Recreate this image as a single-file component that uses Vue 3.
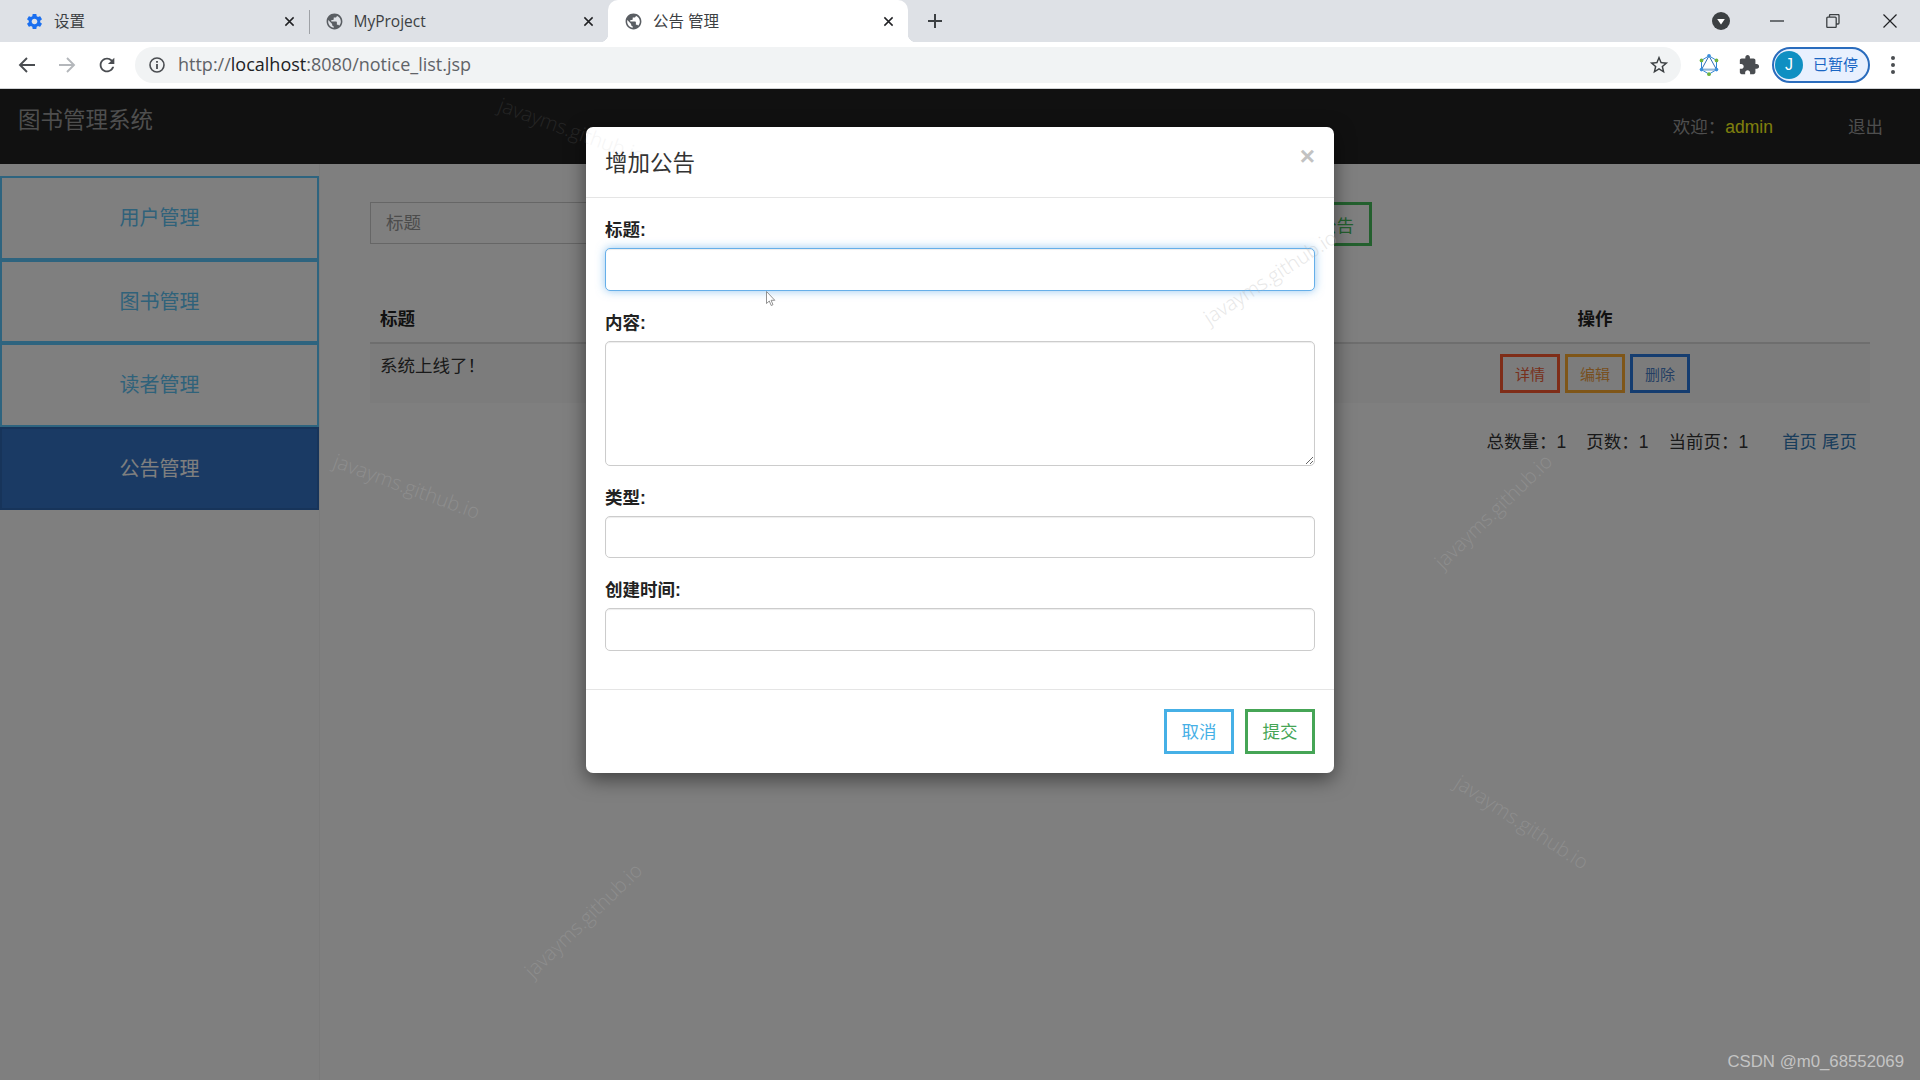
<template>
    <div class="screen">
        <div class="tabbar">
            <div v-for="t in tabs" class="tab" :class="{ active: t.active, split: t.split }">
                <svg v-if="t.icon == 'gear'" class="favicon" viewBox="0 0 24 24"><path fill="#1a6ff0" :d="gearPath" /></svg>
                <svg v-else class="favicon" viewBox="0 0 24 24"><path fill="#5a5e63" :d="globePath" /></svg>
                <span class="tab-title">{{ t.title }}</span>
                <svg class="tab-close" viewBox="0 0 12 12"><path d="M1.5 1.5l9 9M10.5 1.5l-9 9" stroke="#202124" stroke-width="1.6" /></svg>
            </div>
            <svg class="plus" viewBox="0 0 16 16"><path d="M8 1v14M1 8h14" stroke="#3c4043" stroke-width="2" /></svg>
            <div class="win-controls">
                <svg class="tab-search" viewBox="0 0 18 18">
                    <circle cx="9" cy="9" r="9" fill="#3c4043" />
                    <path d="M5.2 7h7.6L9 12.4z" fill="#fff" />
                </svg>
                <div class="win-btn"><svg width="14" height="14" viewBox="0 0 14 14"><path d="M0 7h14" stroke="#3c4043" stroke-width="1.4" /></svg></div>
                <div class="win-btn"><svg width="14" height="14" viewBox="0 0 14 14"><path d="M3.5 3V1.5a1 1 0 0 1 1-1h7.5a1 1 0 0 1 1 1V9a1 1 0 0 1-1 1h-1.5M1.8 3.2h7.4a1 1 0 0 1 1 1v8.3a1 1 0 0 1-1 1H1.8a1 1 0 0 1-1-1V4.200a1 1 0 0 1 1-1z" fill="none" stroke="#3c4043" stroke-width="1.3" /></svg></div>
                <div class="win-btn last"><svg width="14" height="14" viewBox="0 0 14 14"><path d="M.5.5l13 13M13.500.5l-13 13" stroke="#202124" stroke-width="1.2" /></svg></div>
            </div>
        </div>

        <div class="toolbar">
            <div class="nav-btn"><svg width="18" height="18" viewBox="0 0 18 18"><path d="M17 9H2M9 2L2 9l7 7" fill="none" stroke="#4a4d51" stroke-width="1.9" /></svg></div>
            <div class="nav-btn"><svg width="18" height="18" viewBox="0 0 18 18"><path d="M1 9h15M9 2l7 7-7 7" fill="none" stroke="#b4b7bb" stroke-width="1.9" /></svg></div>
            <div class="nav-btn"><svg width="22" height="22" viewBox="0 0 24 24"><path fill="#4a4d51" d="M17.650 6.350A7.958 7.958 0 0 0 12 4c-4.420 0-7.990 3.580-7.990 8s3.570 8 7.990 8c3.730 0 6.840-2.550 7.730-6h-2.080A5.990 5.990 0 0 1 12 18c-3.310 0-6-2.690-6-6s2.690-6 6-6c1.660 0 3.140.69 4.220 1.780L13 11h7V4l-2.350 2.350z" /></svg></div>
            <div class="address">
                <svg class="info" viewBox="0 0 16 16">
                    <circle cx="8" cy="8" r="7" fill="none" stroke="#4a4d51" stroke-width="1.6" />
                    <path d="M8 7v5M8 4v1.800" stroke="#4a4d51" stroke-width="1.8" />
                </svg>
                <span class="url">http://<b>localhost</b>:8080/notice_list.jsp</span>
                <svg class="star" viewBox="0 0 24 24"><path fill="#3c4043" :d="starPath" /></svg>
            </div>
            <div class="nav-btn ext">
                <svg width="20" height="24" viewBox="0 0 24 28">
                    <path d="M12 3L21 8.500v11L12 25l-9-5.500v-11z" fill="none" stroke="#2f86d6" stroke-width="1.200" />
                    <path d="M12 3L21 19.500H3z" fill="none" stroke="#2f6cb5" stroke-width="1.200" />
                    <path d="M4 19.500h16" stroke="#8fb4d8" stroke-width="2.500" />
                    <circle cx="12" cy="3" r="2.200" fill="#3a8fdc" />
                    <circle cx="21" cy="8.500" r="2.200" fill="#6db33f" />
                    <circle cx="21" cy="19.500" r="2.200" fill="#3a8fdc" />
                    <circle cx="12" cy="25" r="2.200" fill="#6db33f" />
                    <circle cx="3" cy="19.500" r="2.200" fill="#3a8fdc" />
                    <circle cx="3" cy="8.500" r="2.200" fill="#6db33f" />
                </svg>
            </div>
            <div class="nav-btn"><svg width="22" height="22" viewBox="0 0 24 24"><path fill="#4a4d51" :d="puzzlePath" /></svg></div>
            <div class="profile">
                <span class="avatar">J</span>
                <span class="paused">已暂停</span>
            </div>
            <div class="more"><i></i><i></i><i></i></div>
        </div>

        <div class="page">
            <div class="navbar">
                <div class="brand">图书管理系统</div>
                <div class="nav-right">
                    <span>欢迎：<span class="admin">admin</span></span>
                    <span class="logout">退出</span>
                </div>
            </div>
            <div class="body">
                <div class="sidebar">
                    <div v-for="m in menu" class="menu-item" :class="{ current: m == '公告管理' }">{{ m }}</div>
                </div>
                <div class="main">
                    <div class="search-row">
                        <input class="search" type="text" placeholder="标题" />
                        <button class="btn-add">增加公告</button>
                    </div>
                    <table class="list">
                        <thead>
                            <tr><th class="col-title">标题</th><th class="col-ops">操作</th></tr>
                        </thead>
                        <tbody>
                            <tr>
                                <td>系统上线了！</td>
                                <td class="ops">
                                    <button class="mini red">详情</button>
                                    <button class="mini orange">编辑</button>
                                    <button class="mini blue">删除</button>
                                </td>
                            </tr>
                        </tbody>
                    </table>
                    <div class="pager">
                        <span>总数量：1</span>
                        <span>页数：1</span>
                        <span>当前页：1</span>
                        <span class="links"><a>首页</a> <a>尾页</a></span>
                    </div>
                </div>
            </div>

            <div class="backdrop"></div>

            <div class="modal">
                <div class="modal-header">
                    <h4>增加公告</h4>
                    <span class="close">×</span>
                </div>
                <div class="modal-body">
                    <div class="group">
                        <label>标题:</label>
                        <input class="field focus" type="text" />
                    </div>
                    <div class="group">
                        <label>内容:</label>
                        <textarea class="field area"></textarea>
                    </div>
                    <div class="group">
                        <label>类型:</label>
                        <input class="field" type="text" />
                    </div>
                    <div class="group">
                        <label>创建时间:</label>
                        <input class="field" type="text" />
                    </div>
                </div>
                <div class="modal-footer">
                    <button class="foot cancel">取消</button>
                    <button class="foot submit">提交</button>
                </div>
            </div>

            <svg class="pointer" width="10" height="16" viewBox="0 0 10 16">
                <path d="M.5.500v12l2.800-2.500 1.900 4.500 1.800-.8-1.900-4.400h3.700z" fill="#fff" stroke="#777" stroke-width=".8" />
            </svg>
        </div>

        <span v-for="w in marks" class="mark" :style="{ left: w.x + 'px', top: w.y + 'px', opacity: w.o, transform: `translate(-50%, -50%) rotate(${w.r}deg)` }">javayms.github.io</span>
        <span class="csdn">CSDN @m0_68552069</span>
    </div>
</template>

<script setup>
const tabs = [
    { title: "设置", icon: "gear" },
    { title: "MyProject", icon: "globe", split: true },
    { title: "公告 管理", icon: "globe", active: true }
]
const menu = ["用户管理", "图书管理", "读者管理", "公告管理"]
const marks = [
    { x: 572, y: 130, r: 20, o: .12 },
    { x: 407, y: 486, r: 20, o: .3 },
    { x: 1270, y: 277, r: -33, o: .3 },
    { x: 1493, y: 511, r: -44, o: .3 },
    { x: 1522, y: 822, r: 33, o: .3 },
    { x: 583, y: 920, r: -44, o: .3 }
]

const gearPath = "M19.14 12.94c.04-.3.06-.61.06-.94 0-.32-.02-.64-.07-.94l2.03-1.58c.18-.14.23-.41.12-.61l-1.92-3.32c-.12-.22-.37-.29-.59-.22l-2.39.96c-.5-.38-1.03-.7-1.62-.94l-.36-2.54c-.04-.24-.24-.41-.48-.41h-3.84c-.24 0-.43.17-.47.41l-.36 2.54c-.59.24-1.13.57-1.62.94l-2.39-.96c-.22-.08-.47 0-.59.22L2.74 8.87c-.12.21-.08.47.12.61l2.03 1.58c-.05.3-.09.63-.09.94s.02.64.07.94l-2.03 1.58c-.18.14-.23.41-.12.61l1.92 3.32c.12.22.37.29.59.22l2.39-.96c.5.38 1.03.7 1.62.94l.36 2.54c.05.24.24.41.48.41h3.84c.24 0 .44-.17.47-.41l.36-2.54c.59-.24 1.13-.56 1.62-.94l2.39.96c.22.08.47 0 .59-.22l1.92-3.32c.12-.22.07-.47-.12-.61l-2.01-1.58zM12 15.6c-1.98 0-3.6-1.62-3.6-3.6s1.62-3.6 3.6-3.6 3.6 1.62 3.6 3.6-1.62 3.6-3.6 3.6z"
const globePath = "M12 2C6.48 2 2 6.48 2 12s4.48 10 10 10 10-4.48 10-10S17.52 2 12 2zm-1 17.93c-3.95-.49-7-3.85-7-7.93 0-.62.08-1.21.21-1.79L9 15v1c0 1.1.9 2 2 2v1.93zm6.9-2.54c-.26-.81-1-1.39-1.9-1.39h-1v-3c0-.55-.45-1-1-1H8v-2h2c.55 0 1-.45 1-1V7h2c1.1 0 2-.9 2-2v-.41c2.93 1.19 5 4.06 5 7.41 0 2.08-.8 3.97-2.1 5.39z"
const starPath = "M22 9.24l-7.19-.62L12 2 9.19 8.63 2 9.24l5.46 4.73L5.82 21 12 17.27 18.18 21l-1.63-7.03L22 9.24zM12 15.4l-3.76 2.27 1-4.28-3.32-2.88 4.38-.38L12 6.1l1.71 4.04 4.38.38-3.32 2.88 1 4.28L12 15.4z"
const puzzlePath = "M20.5 11H19V7c0-1.1-.9-2-2-2h-4V3.5C13 2.12 11.88 1 10.5 1S8 2.12 8 3.5V5H4c-1.1 0-1.99.9-1.99 2v3.8H3.5c1.49 0 2.7 1.21 2.7 2.7s-1.21 2.7-2.7 2.7H2V20c0 1.1.9 2 2 2h3.8v-1.5c0-1.49 1.21-2.7 2.7-2.7 1.49 0 2.7 1.21 2.7 2.7V22H17c1.1 0 2-.9 2-2v-4h1.5c1.38 0 2.5-1.12 2.5-2.5S21.88 11 20.5 11z"
</script>

<style>
html, body {
    margin: 0;
    overflow: hidden;
}
</style>

<style scoped>
.screen {
    width: 1920px;
    height: 1080px;
    display: flex;
    flex-direction: column;
    position: relative;
    overflow: hidden;
    font-family: "Liberation Sans", "Noto Sans CJK SC", sans-serif;
    font-size: 17.5px;
    line-height: 25px;
    color: #333;
    background: #fff;
}

button, input, textarea {
    font-family: inherit;
    box-sizing: border-box;
}

/* browser chrome */
.tabbar {
    height: 42px;
    flex: none;
    display: flex;
    align-items: center;
    padding-left: 9px;
    background: #dee1e6;
    font-family: "Open Sans", "Noto Sans CJK SC", sans-serif;
}

.tab {
    width: 299.5px;
    height: 42px;
    box-sizing: border-box;
    flex: none;
    display: flex;
    align-items: center;
    padding: 0 14px 0 16px;
    position: relative;
    font-size: 15.500px;
    color: #3c4043;
}

.tab.split::before {
    content: "";
    position: absolute;
    left: 0;
    top: 10px;
    height: 24px;
    width: 1px;
    background: #9ea1a6;
}

.tab.active {
    background: #fff;
    border-radius: 10px 10px 0 0;
}

.tab.active::before,
.tab.active::after {
    content: "";
    position: absolute;
    bottom: 0;
    width: 8px;
    height: 8px;
}

.tab.active::before {
    left: -8px;
    background: radial-gradient(circle at 0 0, transparent 8px, #fff 8.5px);
}

.tab.active::after {
    right: -8px;
    background: radial-gradient(circle at 100% 0, transparent 8px, #fff 8.5px);
}

.favicon {
    width: 19px;
    height: 19px;
    flex: none;
}

.tab-title {
    margin-left: 10px;
    flex: 1;
}

.tab-close {
    width: 11px;
    height: 11px;
    flex: none;
}

.plus {
    width: 16px;
    height: 16px;
    margin-left: 19px;
    flex: none;
}

.win-controls {
    margin-left: auto;
    display: flex;
    align-items: center;
    padding-right: 1px;
}

.tab-search {
    width: 18px;
    height: 18px;
    margin-right: 19px;
}

.win-btn {
    width: 56px;
    height: 38px;
    display: flex;
    align-items: center;
    justify-content: center;
}

.win-btn.last {
    width: 58px;
}

.toolbar {
    height: 47px;
    box-sizing: border-box;
    flex: none;
    display: flex;
    align-items: center;
    padding: 0 4px 1px 7px;
    background: #fff;
    border-bottom: 1px solid #d0d2d5;
}

.nav-btn {
    width: 40px;
    height: 40px;
    flex: none;
    display: flex;
    align-items: center;
    justify-content: center;
}

.address {
    flex: 1;
    height: 36px;
    margin: 0 8px;
    padding: 0 14px;
    display: flex;
    align-items: center;
    border-radius: 18px;
    background: #f1f3f4;
}

.info {
    width: 16px;
    height: 16px;
    flex: none;
}

.url {
    margin-left: 13px;
    font-family: "Open Sans", sans-serif;
    font-size: 18px;
    color: #5f6368;
    flex: 1;
}

.url b {
    font-weight: normal;
    color: #202124;
}

.star {
    width: 22px;
    height: 22px;
    margin-right: -3px;
}

.profile {
    width: 98px;
    height: 36px;
    box-sizing: border-box;
    margin-left: 3px;
    flex: none;
    display: flex;
    align-items: center;
    padding-left: 1px;
    border: 2px solid #2a6cbd;
    border-radius: 18px;
    background: #e8f0fe;
}

.avatar {
    width: 28px;
    height: 28px;
    border-radius: 50%;
    background: #0f8fc2;
    color: #fff;
    font-size: 16px;
    line-height: 28px;
    text-align: center;
}

.paused {
    margin-left: 10px;
    font-size: 15px;
    color: #1a66c4;
}

.more {
    width: 46px;
    flex: none;
    display: flex;
    flex-direction: column;
    align-items: center;
    gap: 3px;
}

.more i {
    width: 4px;
    height: 4px;
    border-radius: 50%;
    background: #4a4d51;
}

/* the notice page */
.page {
    flex: 1;
    min-height: 0;
    position: relative;
    display: flex;
    flex-direction: column;
}

.navbar {
    height: 75px;
    flex: none;
    display: flex;
    justify-content: space-between;
    align-items: flex-start;
    padding: 0 37px 0 18px;
    background: #222;
}

.brand {
    margin-top: 17px;
    font-size: 22.5px;
    line-height: 30px;
    color: #9d9d9d;
}

.nav-right {
    margin-top: 26px;
    display: flex;
    gap: 75px;
    color: #9d9d9d;
}

.admin {
    color: #ffff1a;
}

.body {
    flex: 1;
    min-height: 0;
    display: flex;
}

.sidebar {
    width: 320px;
    box-sizing: border-box;
    flex: none;
    padding-top: 12px;
    border-right: 1px solid #f4f4f4;
}

.menu-item {
    height: 83.500px;
    box-sizing: border-box;
    display: flex;
    align-items: center;
    justify-content: center;
    padding-top: 2px;
    border: 2.500px solid #5cc8ff;
    font-size: 20px;
    color: #5fc4f5;
}

.menu-item.current {
    background: #3474c8;
    border-color: #2e68b4;
    color: #fff;
}

.main {
    flex: 1;
    padding: 38px 50px 0;
    min-width: 0;
}

.search-row {
    width: 1002px;
    display: flex;
    justify-content: space-between;
    align-items: flex-start;
}

.search {
    width: 560px;
    height: 42px;
    padding: 0 15px;
    border: 1.500px solid #ccc;
    border-radius: 0;
    font-size: 17.5px;
}

.search::placeholder {
    color: #999;
}

.btn-add {
    width: 106px;
    height: 44px;
    padding: 0;
    border: 3px solid #47c05c;
    background: #fff;
    color: #47c05c;
    font-size: 17.5px;
}

.list {
    width: 100%;
    margin-top: 50px;
    border-collapse: collapse;
    table-layout: fixed;
}

.list th {
    height: 46px;
    padding: 0 10px;
    border-bottom: 2.500px solid #ddd;
    text-align: left;
    font-weight: bold;
    color: #222;
}

.list th.col-title {
    width: 930px;
}

.list th.col-ops {
    text-align: center;
}

.list td {
    padding: 10px;
    vertical-align: top;
    background: #f9f9f9;
    color: #333;
}

.list td.ops {
    padding-left: 0;
    padding-right: 0;
    text-align: center;
    font-size: 0;
}

.mini {
    width: 60px;
    height: 39px;
    margin: 0 2.500px;
    padding: 0;
    background: transparent;
    border: 3px solid;
    font-size: 15px;
}

.mini.red {
    color: #f0603a;
    border-color: #ff5a30;
}

.mini.orange {
    color: #f0a040;
    border-color: #ffac30;
}

.mini.blue {
    color: #4b80c8;
    border-color: #2a7be0;
}

.pager {
    margin-top: 27px;
    padding-right: 13px;
    display: flex;
    justify-content: flex-end;
    gap: 20px;
}

.links {
    margin-left: 14px;
    color: #337ab7;
}

.backdrop {
    position: absolute;
    inset: 0;
    background: rgba(0, 0, 0, .5);
}

/* add-notice dialog */
.modal {
    position: absolute;
    left: 586px;
    top: 38px;
    width: 748px;
    background: #fff;
    border-radius: 7px;
    box-shadow: 0 6px 20px rgba(0, 0, 0, .5);
}

.modal-header {
    height: 71px;
    box-sizing: border-box;
    display: flex;
    justify-content: space-between;
    border-bottom: 1.500px solid #e5e5e5;
    padding: 0 19px;
}

.modal-header h4 {
    margin: 22px 0 0;
    font-size: 22.5px;
    line-height: 30px;
    font-weight: normal;
    color: #333;
}

.close {
    margin: 16px 0 0 0;
    font-size: 26px;
    line-height: 26px;
    font-weight: bold;
    color: #c2c2c2;
}

.modal-body {
    padding: 20px 19px 18px;
}

.group {
    margin-bottom: 20px;
}

.group label {
    display: block;
    margin-bottom: 5px;
    font-weight: bold;
    color: #222;
}

.field {
    display: block;
    width: 100%;
    height: 42.500px;
    padding: 8px 15px;
    border: 1.500px solid #ccc;
    border-radius: 5px;
    background: #fff;
    box-shadow: inset 0 1px 1px rgba(0, 0, 0, .075);
    outline: none;
    font-size: 17.5px;
}

.field.focus {
    border-color: #66afe9;
    box-shadow: inset 0 1px 1px rgba(0, 0, 0, .075), 0 0 10px rgba(102, 175, 233, .7);
}

.field.area {
    height: 125px;
    resize: vertical;
}

.modal-footer {
    display: flex;
    justify-content: flex-end;
    gap: 11px;
    padding: 19px;
    border-top: 1.500px solid #e5e5e5;
}

.foot {
    width: 70px;
    height: 45px;
    padding: 0 0 2px;
    background: #fff;
    border: 3px solid;
    font-size: 17.5px;
}

.foot.cancel {
    border-color: #46b0e6;
    color: #46b0e6;
}

.foot.submit {
    border-color: #46a556;
    color: #46a556;
}

.pointer {
    position: absolute;
    left: 766px;
    top: 202px;
}

.mark {
    position: absolute;
    font-family: "Open Sans", sans-serif;
    font-size: 20px;
    font-weight: 300;
    white-space: nowrap;
    color: #b0b0b0;
    pointer-events: none;
}

.csdn {
    position: absolute;
    right: 16px;
    bottom: 9px;
    font-size: 16.800px;
    line-height: 18px;
    color: #c4c4c4;
}
</style>
